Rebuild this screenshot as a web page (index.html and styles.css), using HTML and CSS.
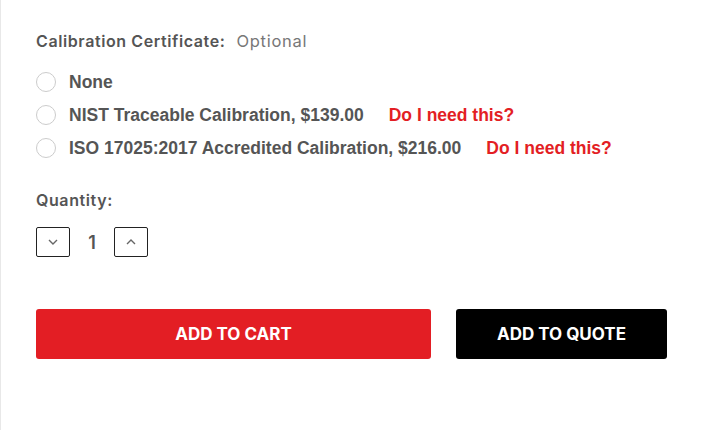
FILE: index.html
```html
<!DOCTYPE html>
<html lang="en">
<head>
<meta charset="utf-8">
<title>Product options</title>
<link rel="stylesheet" href="styles.css">
</head>
<body>
<div class="panel">
  <div class="field-label"><span class="label-strong">Calibration Certificate:</span><span class="label-note">Optional</span></div>
  <ul class="options">
    <li class="option"><span class="radio"></span><span class="opt-text">None</span></li>
    <li class="option"><span class="radio"></span><span class="opt-text">NIST Traceable Calibration, $139.00</span><a class="help" href="#">Do I need this?</a></li>
    <li class="option"><span class="radio"></span><span class="opt-text">ISO 17025:2017 Accredited Calibration, $216.00</span><a class="help" href="#">Do I need this?</a></li>
  </ul>
  <div class="field-label qty-label"><span class="label-strong">Quantity:</span></div>
  <div class="qty">
    <button class="qty-btn" type="button" aria-label="Decrease"><svg width="10" height="6" viewBox="0 0 10 6"><path d="M1 1l4 4 4-4" fill="none" stroke="#666" stroke-width="1.4"/></svg></button>
    <span class="qty-val">1</span>
    <button class="qty-btn" type="button" aria-label="Increase"><svg width="10" height="6" viewBox="0 0 10 6"><path d="M1 5l4-4 4 4" fill="none" stroke="#666" stroke-width="1.4"/></svg></button>
  </div>
  <div class="actions">
    <button class="btn btn-cart" type="button">Add to Cart</button>
    <button class="btn btn-quote" type="button">Add to Quote</button>
  </div>
</div>
</body>
</html>
```

FILE: styles.css
```css
html, body {
  margin: 0;
  padding: 0;
  background: #fff;
}
.panel {
  border-left: 1px solid #e8e8e8;
  min-height: 430px;
  box-sizing: border-box;
  padding: 30px 0 0 35px;
  font-family: Inter, "Open Sans", sans-serif;
  color: #555;
}
.field-label {
  font-size: 16px;
  line-height: 22px;
  display: flex;
  gap: 11px;
}
.label-strong {
  font-weight: 600;
  color: #555;
  letter-spacing: 0.6px;
}
.label-note {
  font-weight: 400;
  color: #777;
  font-size: 16.5px;
  letter-spacing: 0.7px;
}
.options {
  list-style: none;
  margin: 20px 0 0;
  padding: 0;
  display: flex;
  flex-direction: column;
  gap: 13px;
}
.option {
  display: flex;
  align-items: center;
  height: 20px;
  font-family: "Liberation Sans", Arial, sans-serif;
  font-weight: 700;
  font-size: 17.5px;
}
.radio {
  width: 18px;
  height: 18px;
  border: 1px solid #ccc;
  border-radius: 50%;
  box-sizing: content-box;
  margin-right: 13px;
  flex: none;
}
.opt-text {
  color: #555;
}
.help {
  color: #e31e24;
  text-decoration: none;
  margin-left: 25px;
}
.qty-label {
  margin-top: 31px;
}
.qty {
  display: flex;
  align-items: center;
  margin-top: 16px;
  height: 30px;
}
.qty-btn {
  width: 34px;
  height: 30px;
  border: 1px solid #222;
  border-radius: 2px;
  background: #fff;
  padding: 0;
  display: flex;
  align-items: center;
  justify-content: center;
}
.qty-val {
  width: 44px;
  text-align: center;
  font-size: 18px;
  font-weight: 600;
  color: #555;
}
.actions {
  display: flex;
  gap: 25px;
  margin-top: 52px;
}
.btn {
  height: 50px;
  border: none;
  border-radius: 3px;
  color: #fff;
  text-transform: uppercase;
  font-family: Inter, "Open Sans", sans-serif;
  font-weight: 700;
  font-size: 17px;
  letter-spacing: 0;
  padding: 0;
}
.btn-cart {
  width: 395px;
  background: #e31e24;
}
.btn-quote {
  width: 211px;
  background: #000;
}
```
